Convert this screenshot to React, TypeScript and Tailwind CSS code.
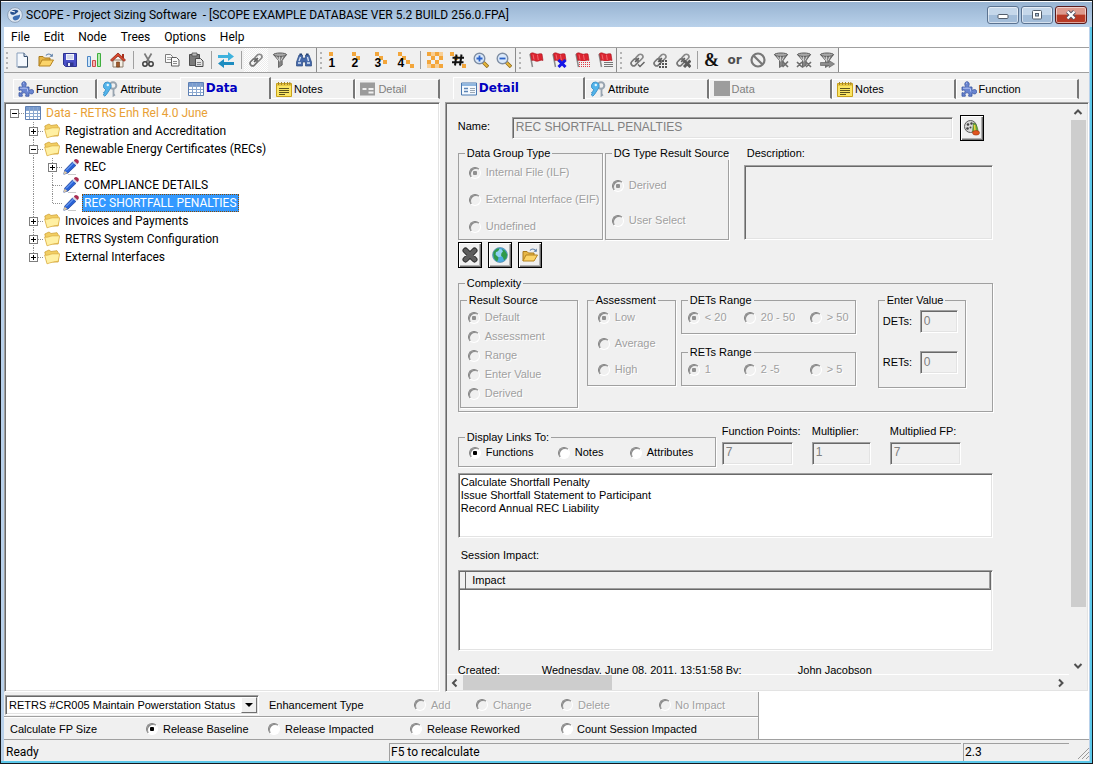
import React, { useState } from "react";

type Kids = { children?: React.ReactNode };

const Svg = ({ children, className = "" }: Kids & { className?: string }) => (
  <svg viewBox="0 0 16 16" className={"size-4 shrink-0 " + className} fill="none" aria-hidden="true">
    {children}
  </svg>
);

/* ---------- icons ---------- */

const PageIcon = () => (
  <Svg>
    <path d="M3 1h7l3.500 3.500V15H3z" fill="#f4f8fd" stroke="#8aa0bd" />
    <path d="M10 1v3.500h3.500" fill="#cfdcec" stroke="#3d5472" />
    <path d="M13.500 5v10H4" stroke="#33475f" />
  </Svg>
);
const OpenIcon = () => (
  <Svg>
    <path d="M1 14V4.500h4l1.500 1.500H12V8" fill="#e6b647" stroke="#a8791c" />
    <path d="M1 14l3-6h11.500l-3.500 6z" fill="#fbd469" stroke="#b58320" />
    <path d="M8 3.500c1.500-2 4-2 5.500 0" stroke="#5b7ea8" strokeWidth="1.200" />
    <path d="M14.800 1.500v3.300h-3.300z" fill="#5b7ea8" />
  </Svg>
);
const SaveIcon = () => (
  <Svg>
    <path d="M1.500 1.500h13v13h-11l-2-2z" fill="#4a50c8" stroke="#2c3290" />
    <path d="M4 2h8v6H4z" fill="#f0f2fb" />
    <path d="M5 4h6M5 6h6" stroke="#b9c0df" />
    <path d="M4.500 10.500h7v4h-7z" fill="#30378e" />
    <path d="M6 11h2v3H6z" fill="#e8ebfa" />
  </Svg>
);
const BarsIcon = () => (
  <Svg>
    <path d="M1.500 4.500h3v10h-3z" fill="#cfe6fa" stroke="#4c86c4" />
    <path d="M6.500 8.500h3v6h-3z" fill="#f7b4b4" stroke="#cc4b4b" />
    <path d="M11.500 1.500h3v13h-3z" fill="#b2ecae" stroke="#3fae3e" />
  </Svg>
);
const HomeIcon = () => (
  <Svg>
    <path d="M3 8h10v7H3z" fill="#f6efe4" stroke="#8b7c6b" />
    <path d="M12 2h2v4h-2z" fill="#a8321f" />
    <path d="M8 1L.5 8l1.500 1.300L8 4l6 5.300L15.500 8z" fill="#d9482e" stroke="#8d2413" strokeWidth=".8" />
    <path d="M6.500 10h3v5h-3z" fill="#a05a2c" stroke="#6d3713" strokeWidth=".6" />
  </Svg>
);
const CutIcon = () => (
  <Svg>
    <path d="M4.500 1.500l5 8.500M11.500 1.500l-5 8.500" stroke="#7b7b7b" strokeWidth="1.700" />
    <circle cx="5" cy="12" r="2.200" stroke="#3e3e3e" strokeWidth="1.500" />
    <circle cx="11" cy="12" r="2.200" stroke="#3e3e3e" strokeWidth="1.500" />
  </Svg>
);
const CopyIcon = () => (
  <Svg>
    <path d="M1.500 2.500h5l2 2v6h-7z" fill="#fafafa" stroke="#7c7c7c" />
    <path d="M3 5.500h4M3 7.500h4" stroke="#a5a5a5" />
    <path d="M7.500 5.500h5l2.500 2.500v6H7.500z" fill="#fafafa" stroke="#5e5e5e" />
    <path d="M9 9.500h4M9 11.500h4" stroke="#8a8a8a" />
  </Svg>
);
const PasteIcon = () => (
  <Svg>
    <path d="M1.500 2.500h10v11h-10z" fill="#7a7a7a" stroke="#4f4f4f" />
    <path d="M4 1h5v3H4z" fill="#bdbdbd" stroke="#4f4f4f" strokeWidth=".8" />
    <path d="M7.500 6.500h5l2.500 2.500v5.500H7.500z" fill="#e4e4e4" stroke="#4a4a4a" />
    <path d="M9 10.500h4M9 12.500h4" stroke="#8a8a8a" />
  </Svg>
);
const SwapIcon = () => (
  <Svg>
    <path d="M0 3h10V0l6 4.500L10 9V6H0z" fill="#3fb2dd" />
    <path d="M16 10H6V7L0 11.500 6 16v-3h10z" fill="#1d8cc0" />
  </Svg>
);
const chainPaths = (
  <>
    <rect x="7.800" y="1.800" width="5" height="8" rx="2.500" transform="rotate(45 10.300 5.800)" stroke="#8a8a8a" strokeWidth="1.700" />
    <rect x="3.200" y="6.200" width="5" height="8" rx="2.500" transform="rotate(45 5.700 10.200)" stroke="#777777" strokeWidth="1.700" />
    <path d="M6 10l4-4" stroke="#5f5f5f" strokeWidth="1.300" />
  </>
);
const ChainIcon = () => <Svg>{chainPaths}</Svg>;
const ChainTickIcon = () => (
  <Svg>
    {chainPaths}
    <path d="M9 12.500l2 2 4.500-4.500" stroke="#666" strokeWidth="1.500" />
  </Svg>
);
const ChainGridIcon = () => (
  <Svg>
    {chainPaths}
    <path d="M7 9h9M7 12h9M7 15h9" stroke="#555" strokeWidth="2" strokeDasharray="2 1" />
  </Svg>
);
const ChainCrossIcon = () => (
  <Svg>
    {chainPaths}
    <path d="M9 8.500l6.500 6.500M15.500 8.500L9 15" stroke="#5c5c5c" strokeWidth="3" />
  </Svg>
);
const funnelPaths = (
  <>
    <path d="M1.500 2.500h13L10.200 8.500V13L6.500 15.500V8.500z" fill="#858585" stroke="#555" strokeWidth=".8" />
    <ellipse cx="8" cy="2.700" rx="6.500" ry="1.700" fill="#a9a9a9" stroke="#5a5a5a" strokeWidth="1" />
    <path d="M4.500 4.500l2.500 4M7.500 4.500v5M11 4.500L9 8.500" stroke="#cfcfcf" />
  </>
);
const FunnelIcon = () => <Svg>{funnelPaths}</Svg>;
const FunnelXIcon = () => (
  <Svg>
    {funnelPaths}
    <path d="M9.500 9.500l5.500 5.500M15 9.500L9.500 15" stroke="#6d6d6d" strokeWidth="1.700" />
  </Svg>
);
const FunnelXXIcon = () => (
  <Svg>
    {funnelPaths}
    <path d="M1 10l5 5M6 10l-5 5M10 10l5 5M15 10l-5 5" stroke="#6d6d6d" strokeWidth="1.600" />
  </Svg>
);
const FunnelArrowIcon = () => (
  <Svg>
    {funnelPaths}
    <path d="M1.500 10.500H10V8.500l5.500 3.500-5.500 3.500v-2H1.500z" fill="#8c8c8c" stroke="#666" strokeWidth=".7" />
  </Svg>
);
const BinocularsIcon = () => (
  <Svg>
    <path d="M3 3h3.500v3h3V3H13l2.500 7v4h-6v-4h-3v4h-6v-4z" fill="#4669aa" stroke="#2b4a80" strokeWidth=".7" />
    <path d="M3.500 1.500h2.500V3H3.500zM10 1.500h2.500V3H10z" fill="#22406f" />
    <path d="M2 11h3M11 11h3M4.500 5l-1.500 4M11.500 5l1 4" stroke="#d5e3f6" strokeWidth="1.300" />
  </Svg>
);

const orange = "#f3a63b";
const LevelIcon = ({ n }: { n: number }) => (
  <span className="relative block size-4">
    <Svg>
      {[0, 1, 2, 3].slice(0, n).map((i) => (
        <rect key={i} x={i * 4} y={i * 4} width="4" height="4" fill={orange} />
      ))}
    </Svg>
    <span className="absolute top-[5px] left-0 font-['Liberation_Sans',Arial,sans-serif] text-[12px] leading-3 font-bold text-black">{n}</span>
  </span>
);
const CheckerIcon = () => (
  <Svg>
    {[0, 1, 2, 3].flatMap((r) =>
      [0, 1, 2, 3].filter((c) => (r + c) % 2 === 0).map((c) => (
        <rect key={r + "-" + c} x={c * 4} y={r * 4} width="4" height="4" fill={orange} />
      ))
    )}
    <path d="M4 0h4v4H4zM8 12h4v4H8zM0 12h4v4H0zM12 0h4v4h-4z" fill="#f9cf94" />
  </Svg>
);
const HashIcon = () => (
  <Svg>
    <path d="M0 0h4v4H0zM12 12h4v4h-4zM4 4h4v4H4z" fill={orange} />
    <path d="M6.500 2.500l-1.500 11M11.500 2.500l-1.500 11M2.500 5.800h11.500M2 10.200h11.500" stroke="#111" strokeWidth="2" />
  </Svg>
);
const ZoomIcon = ({ plus }: { plus?: boolean }) => (
  <Svg>
    <path d="M10 10l5 5" stroke="#8e6a1a" strokeWidth="3.400" />
    <path d="M10.500 10.500l4 4" stroke="#e9b83b" strokeWidth="1.800" />
    <circle cx="6.500" cy="6.500" r="5.300" fill="#dbe9fa" stroke="#7f8ea3" strokeWidth="1.400" />
    <path d={plus ? "M3.500 6.500h6M6.500 3.500v6" : "M3.500 6.500h6"} stroke="#2b62c9" strokeWidth="1.800" />
  </Svg>
);
const flagPaths = (
  <>
    <path d="M2 2l2.500 13" stroke="#8a8a8a" strokeWidth="1.500" />
    <path d="M2.500 1.500c3-2 5 1.500 8 .5 1.500-.5 2.500-.5 3.500 0l1 6.500c-2.500-1-3.500.5-5.500.8C7 9.500 6 7.500 3.800 8.500z" fill="#dc2430" stroke="#a5121d" strokeWidth=".6" />
    <path d="M5 2.500l1 5M9.500 3l.8 5" stroke="#f3676f" />
  </>
);
const FlagIcon = () => <Svg>{flagPaths}</Svg>;
const FlagXIcon = () => (
  <Svg>
    {flagPaths}
    <path d="M7.500 8l7 7M14.500 8l-7 7" stroke="#1616e6" strokeWidth="3" />
  </Svg>
);
const FlagGridIcon = () => (
  <Svg>
    {flagPaths}
    <path d="M5 9h11v7H5z" fill="#f0f0f0" />
    <path d="M5 10.500h11M5 12.500h11M5 14.500h11" stroke="#e23a44" strokeDasharray="1 1" />
  </Svg>
);
const FlagListIcon = () => (
  <Svg>
    {flagPaths}
    <path d="M6 9h10v7H6z" fill="#f0f0f0" />
    <path d="M7 10.500h9M7 12.500h9M7 14.500h9" stroke="#777" />
  </Svg>
);
const AmpIcon = () => (
  <span className="font-['Liberation_Serif','Times_New_Roman',serif] text-[18px] leading-4 font-bold text-[#111]">&amp;</span>
);
const OrIcon = () => (
  <span className="font-['DejaVu_Sans',sans-serif] text-[12px] leading-3 font-bold text-[#4f4f4f]">or</span>
);
const NoIcon = () => (
  <Svg>
    <circle cx="8" cy="8" r="6.500" stroke="#787878" strokeWidth="2.200" />
    <path d="M3.500 3.500l9 9" stroke="#787878" strokeWidth="2.200" />
  </Svg>
);
const PuzzleIcon = () => (
  <Svg>
    <path
      d="M1 6h3.500c.6-.5-.7-1.200-.7-2.700C3.800 1.600 4.800.7 6 .7s2.200.9 2.200 2.600c0 1.500-1.300 2.200-.7 2.700H11v3.200c.5.500 1.200-.7 2.500-.7 1.300 0 2.200 1 2.200 2.200s-.9 2.200-2.200 2.200-2-1.200-2.500-.7v3H7.700c-.6-.5.300-1 .3-1.900 0-.9-.9-1.500-2-1.500s-2 .6-2 1.500c0 .9.900 1.400.3 1.900H1v-3.500c.5-.4 1 .3 1.800.3.700 0 1.200-.7 1.200-1.500s-.5-1.500-1.200-1.500c-.8 0-1.300.7-1.800.3z"
      fill="#6a85d0"
      stroke="#33509e"
      strokeWidth=".8"
    />
    <path d="M2 7.200h7M5 2.500l1-.6M9.500 7.500v3" stroke="#b2c3f2" />
  </Svg>
);
const KeysIcon = () => (
  <Svg>
    <circle cx="11" cy="4.500" r="3.300" stroke="#98a4b0" strokeWidth="2" />
    <path d="M11.500 8v6.500l1.500-1" stroke="#98a4b0" strokeWidth="1.800" />
    <path d="M5.500 1a4 4 0 013 6.300L4.500 13.500l-1.700 1.700L1 13.500l1.300-1-.8-1 1.500-1L3.500 8.500A4 4 0 015.500 1z" fill="#53b4ea" stroke="#2f86c0" strokeWidth=".8" />
    <circle cx="5.800" cy="4" r="1.200" fill="#e6f5fd" />
  </Svg>
);
const GridIcon = () => (
  <Svg>
    <path d="M.5 1.500h15v13H.5z" fill="#fff" stroke="#5d7fb3" />
    <path d="M1 2h14v3H1z" fill="#7a9ccf" />
    <path d="M1 5.500h14M1 8.500h14M1 11.500h14M4.500 2v12M8.500 2v12M12.500 2v12" stroke="#8ba8cf" />
  </Svg>
);
const NotesIcon = () => (
  <Svg>
    <path d="M.5 2.500h15v13H.5z" fill="#fbe564" stroke="#c9a21c" />
    <path d="M1 3h14v2H1z" fill="#e8c745" />
    <path d="M2.500 1v3M5.500 1v3M8.500 1v3M11.500 1v3M13.800 1v3" stroke="#a3842c" />
    <path d="M3 7.500h10M3 9.500h10M3 11.500h10M3 13.500h6" stroke="#5c531e" />
  </Svg>
);
const DetailIcon = () => (
  <Svg>
    <path d="M.5 2h15v12H.5z" fill="#f4f9fe" stroke="#4a78b0" />
    <path d="M1 2.500h14V5H1z" fill="#8fb6df" />
    <path d="M3 7.500h4M3 10.500h4" stroke="#5c85b5" strokeWidth="1.400" />
    <path d="M9 7.500h5M9 9.500h5M9 11.500h5" stroke="#9aa7b5" />
  </Svg>
);
const DetailGreyIcon = () => (
  <Svg>
    <path d="M0 1.500h15v13H0z" fill="#9b9b9b" />
    <path d="M2.500 8h4M8.500 8h5M8.500 11.500h5" stroke="#f0f0f0" strokeWidth="2" />
  </Svg>
);
const SquareGreyIcon = () => (
  <Svg>
    <path d="M0 0h16v15H0z" fill="#9d9d9d" />
  </Svg>
);
const FolderIcon = () => (
  <Svg>
    <path d="M.8 3L5 1l2 1.500 6-.8 1.200 2V13H3z" fill="#f2ce62" stroke="#d0a33a" strokeWidth=".8" />
    <path d="M3 14.800L.6 6c3.500 1 5.500-1.200 8.200-1.200h6.900L14.200 12.300c-4 .2-7.500 1.300-11.200 2.500z" fill="#fff0a3" stroke="#dcae42" strokeWidth=".8" />
  </Svg>
);
const PencilIcon = () => (
  <Svg>
    <path d="M5 15.500h8" stroke="#c9c9c9" />
    <path d="M.8 15.200l1-4.200L9.500 3l3.500 3.300L5 14z" fill="#2a63d6" stroke="#153a92" strokeWidth=".7" />
    <path d="M.8 15.200l.8-3.500L4.500 14z" fill="#e9cfa2" />
    <path d="M3 11.500l7.500-7.500" stroke="#86b4ff" />
    <path d="M9.500 3l1.500-1.500 3.500 3.300-1.500 1.500z" fill="#d8dce6" />
    <path d="M11 1.500C12.500 0 13.500 0 14.700 1s1.200 2.500-.2 3.800z" fill="#b02a52" stroke="#8a183b" strokeWidth=".5" />
  </Svg>
);
const BigXIcon = () => (
  <Svg>
    <path d="M3.500 3.500l9 9M12.500 3.500l-9 9" stroke="#2c2c2c" strokeWidth="6" strokeLinecap="round" />
    <path d="M3.500 3.500l9 9M12.500 3.500l-9 9" stroke="#5c5c5c" strokeWidth="4" strokeLinecap="round" />
  </Svg>
);
const GlobeIcon = () => (
  <Svg>
    <circle cx="8" cy="8" r="7.500" fill="#4da9de" stroke="#4d7f9f" strokeWidth=".6" />
    <circle cx="7" cy="6" r="4" fill="#8fd0f0" />
    <path d="M1.500 5C3 2.500 5 1.200 7.500 1.200L7 3 5.500 4.500 4 5 3.500 7.500 5 9l1.500 1.500L6 13l-1 1.500C2.500 12.500.8 10 1.500 5z" fill="#2f9a4a" />
    <path d="M10 2l3 1.500 2.200 4-.7 3.500-2.500 2.500-1-3L9 8.500 9.500 6l1.500-1.500z" fill="#2f9a4a" />
  </Svg>
);
const FilmIcon = () => (
  <Svg>
    <circle cx="6.500" cy="6.500" r="6" fill="#d9d9d9" stroke="#5d5d5d" />
    <circle cx="4" cy="4.500" r="1.300" fill="#444" />
    <circle cx="7.500" cy="3.500" r="1.200" fill="#444" />
    <circle cx="3.500" cy="8.500" r="1.300" fill="#444" />
    <circle cx="6.500" cy="7.500" r="1" fill="#444" />
    <path d="M9.500 3c2.500.5 4 3.500 4.500 8l-5.500 1z" fill="#69a83a" stroke="#3f6d1d" strokeWidth=".6" />
    <path d="M10.500 5l.5 6" stroke="#f2d13c" strokeWidth="1.500" />
    <ellipse cx="12" cy="12.800" rx="3.500" ry="2.300" fill="#e1551f" stroke="#9c3410" strokeWidth=".6" />
  </Svg>
);
const AppIcon = () => (
  <Svg>
    <circle cx="8" cy="8" r="7.400" fill="#dfe8f2" stroke="#8ca0b8" />
    <path d="M3 6c1-3 5-4 8-2.500 1 1.500-1 2-2 3S5 9 3 6z" fill="#27508f" />
    <path d="M6 10c2-2 5-1 7-2.500.5 3-2 6-5 6-1.500-.5-3-2-2-3.500z" fill="#3c6db2" />
    <path d="M4 4l4 1" stroke="#fff" strokeWidth="1.200" />
  </Svg>
);
const Chevron = ({ d }: { d: string }) => (
  <svg viewBox="0 0 16 16" className="size-4" fill="none" aria-hidden="true">
    <path d={d} stroke="#505050" strokeWidth="2" />
  </svg>
);

/* ---------- toolbar ---------- */

type Tool = [string, React.ReactNode] | "sep";

const groups: { button: string; grip: string; tools: Tool[] }[] = [
  {
    button: "w-6",
    grip: "w-1.5",
    tools: [
      ["New", <PageIcon />],
      ["Open", <OpenIcon />],
      ["Save", <SaveIcon />],
      ["Statistics", <BarsIcon />],
      ["Home", <HomeIcon />],
      "sep",
      ["Cut", <CutIcon />],
      ["Copy", <CopyIcon />],
      ["Paste", <PasteIcon />],
      "sep",
      ["Swap trees", <SwapIcon />],
      "sep",
      ["Link", <ChainIcon />],
      ["Filter", <FunnelIcon />],
      ["Find", <BinocularsIcon />],
    ],
  },
  {
    button: "w-[23px]",
    grip: "w-2",
    tools: [
      ["Level 1", <LevelIcon n={1} />],
      ["Level 2", <LevelIcon n={2} />],
      ["Level 3", <LevelIcon n={3} />],
      ["Level 4", <LevelIcon n={4} />],
      "sep",
      ["All levels", <CheckerIcon />],
      ["Numbering", <HashIcon />],
      ["Zoom in", <ZoomIcon plus />],
      ["Zoom out", <ZoomIcon />],
    ],
  },
  {
    button: "w-[23px]",
    grip: "w-2",
    tools: [
      ["Flag", <FlagIcon />],
      ["Clear flag", <FlagXIcon />],
      ["Flag all", <FlagGridIcon />],
      ["Flag list", <FlagListIcon />],
    ],
  },
  {
    button: "w-[23px]",
    grip: "w-2",
    tools: [
      ["Check links", <ChainTickIcon />],
      ["Link grid", <ChainGridIcon />],
      ["Remove links", <ChainCrossIcon />],
      "sep",
      ["And", <AmpIcon />],
      ["Or", <OrIcon />],
      ["Not", <NoIcon />],
      ["Clear filter", <FunnelXIcon />],
      ["Clear all filters", <FunnelXXIcon />],
      ["Apply filter", <FunnelArrowIcon />],
    ],
  },
];

const Toolbar = () => (
  <div className="flex h-[26px] shrink-0 border-y border-[#a0a0a0] bg-white">
    {groups.map((g, i) => (
      <div key={i} className="flex h-6 items-center border-r border-[#8c8c8c] bg-[#f0f0f0]">
        <span className={"flex h-full flex-col items-center justify-center gap-[3px] " + g.grip}>
          {[0, 1, 2, 3].map((d) => (
            <i key={d} className="size-0.5 bg-[#b4b4b4]" />
          ))}
        </span>
        {g.tools.map((t, k) =>
          t === "sep" ? (
            <span key={k} className="flex h-full w-1.5 items-center justify-center">
              <i className="h-[18px] w-px bg-[#a0a0a0]" />
            </span>
          ) : (
            <button
              key={k}
              type="button"
              aria-label={t[0]}
              className={
                "flex h-6 items-center justify-center " +
                g.button +
                (t[0] === "Link" ? " bg-[conic-gradient(#fff_25%,#ececec_0_50%,#fff_0_75%,#ececec_0)] bg-size-[2px_2px]" : "")
              }
            >
              {t[1]}
            </button>
          )
        )}
      </div>
    ))}
  </div>
);

/* ---------- tabs ---------- */

type TabDef = { label: string; icon: React.ReactNode; state?: "on" | "off" };

const Tabs = ({ tabs, className }: { tabs: TabDef[]; className: string }) => (
  <div role="tablist" className={"flex h-[22px] min-w-0 items-end " + className}>
    {tabs.map((t, i) => (
      <button
        key={i}
        type="button"
        role="tab"
        aria-selected={t.state === "on"}
        className={
          "flex min-w-0 items-center gap-0.5 overflow-hidden border-t border-l border-white whitespace-nowrap " +
          (t.state === "on"
            ? "h-[22px] flex-[21] pl-[7px] font-['DejaVu_Sans',sans-serif] text-[12px] font-bold text-[#0000c0]"
            : "h-5 flex-[20] border-b pl-1 text-[11px]") +
          (t.state === "off" ? " text-[#808080]" : "") +
          (tabs[i + 1]?.state === "on" ? "" : " border-r-2 border-r-[#777]")
        }
      >
        {t.icon}
        {t.label}
      </button>
    ))}
  </div>
);

const leftTabs: TabDef[] = [
  { label: "Function", icon: <PuzzleIcon /> },
  { label: "Attribute", icon: <KeysIcon /> },
  { label: "Data", icon: <GridIcon />, state: "on" },
  { label: "Notes", icon: <NotesIcon /> },
  { label: "Detail", icon: <DetailGreyIcon />, state: "off" },
];
const rightTabs: TabDef[] = [
  { label: "Detail", icon: <DetailIcon />, state: "on" },
  { label: "Attribute", icon: <KeysIcon /> },
  { label: "Data", icon: <SquareGreyIcon />, state: "off" },
  { label: "Notes", icon: <NotesIcon /> },
  { label: "Function", icon: <PuzzleIcon /> },
];

/* ---------- tree ---------- */

type Cell = { up?: boolean; down?: boolean; right?: boolean; box?: "+" | "-" };
type Row = { label: string; icon: "grid" | "folder" | "pencil"; cells: Cell[]; on?: boolean };

const line: Cell = { up: true, down: true };
const rows: Row[] = [
  { label: "Data - RETRS Enh Rel 4.0 June", icon: "grid", cells: [{ right: true, box: "-" }] },
  { label: "Registration and Accreditation", icon: "folder", cells: [{}, { ...line, right: true, box: "+" }] },
  { label: "Renewable Energy Certificates (RECs)", icon: "folder", cells: [{}, { ...line, right: true, box: "-" }] },
  { label: "REC", icon: "pencil", cells: [{}, line, { ...line, right: true, box: "+" }] },
  { label: "COMPLIANCE DETAILS", icon: "pencil", cells: [{}, line, { ...line, right: true }] },
  { label: "REC SHORTFALL PENALTIES", icon: "pencil", cells: [{}, line, { up: true, right: true }], on: true },
  { label: "Invoices and Payments", icon: "folder", cells: [{}, { ...line, right: true, box: "+" }] },
  { label: "RETRS System Configuration", icon: "folder", cells: [{}, { ...line, right: true, box: "+" }] },
  { label: "External Interfaces", icon: "folder", cells: [{}, { up: true, right: true, box: "+" }] },
];

const Guide = ({ c }: { c: Cell }) => (
  <svg viewBox="0 0 19 18" className="h-[18px] w-[19px]" fill="none" aria-hidden="true">
    <g stroke="#909090" strokeDasharray="1 1">
      {c.up && <path d="M8.500 0v9" />}
      {c.down && <path d="M8.500 9v9" />}
      {c.right && <path d="M9 9.500h10" />}
    </g>
    {c.box && (
      <>
        <rect x="4.500" y="5.500" width="8" height="8" fill="#fff" stroke="#7e7e7e" />
        <path d={c.box === "+" ? "M6 9.500h5M8.500 7v5" : "M6 9.500h5"} stroke="#000" />
      </>
    )}
  </svg>
);

const Tree = () => (
  <ul role="tree" aria-label="Data" className="font-['Roboto','Segoe_UI',sans-serif] text-[12px] leading-4">
    {rows.map((r) => (
      <li key={r.label} role="treeitem" aria-selected={!!r.on} className="flex h-[18px] items-center whitespace-nowrap">
        {r.cells.map((c, i) =>
          c.box ? (
            <button key={i} type="button" aria-label={(c.box === "+" ? "Expand " : "Collapse ") + r.label}>
              <Guide c={c} />
            </button>
          ) : (
            <Guide key={i} c={c} />
          )
        )}
        {r.icon === "grid" ? <GridIcon /> : r.icon === "folder" ? <FolderIcon /> : <PencilIcon />}
        <span
          className={
            "ml-[3px] border border-dotted px-px " +
            (r.on
              ? "border-[#8a4a00] bg-[#3399ff] text-white"
              : r.icon === "grid"
                ? "border-transparent text-[#e8a035]"
                : "border-transparent text-black")
          }
        >
          {r.label}
        </span>
      </li>
    ))}
  </ul>
);

/* ---------- form parts ---------- */

const sunken =
  "border border-t-[#a0a0a0] border-l-[#a0a0a0] border-r-white border-b-white shadow-[inset_1px_1px_0_#696969,inset_-1px_-1px_0_#e3e3e3]";

const Radio = ({ name, label, on, off, gap = "gap-[5px]" }: { name: string; label: string; on?: boolean; off?: boolean; gap?: string }) => (
  <label className={"flex h-[13px] items-center whitespace-nowrap " + gap + (off ? " text-[#a0a0a0] [text-shadow:1px_1px_0_#fff]" : "")}>
    <input
      type="radio"
      name={name}
      defaultChecked={on}
      disabled={off}
      className={
        "size-3 shrink-0 appearance-none rounded-full border border-t-[#808080] border-r-white border-b-white border-l-[#808080] shadow-[inset_1px_1px_0_#8a8a8a] " +
        (off
          ? "bg-[#f0f0f0] checked:bg-[radial-gradient(circle,#909090_0_2px,transparent_2.5px)]"
          : "bg-white checked:bg-[radial-gradient(circle,#000_0_2px,transparent_2.5px)]")
      }
    />
    {label}
  </label>
);

const Group = ({ title, className = "", children }: Kids & { title: string; className?: string }) => (
  <fieldset className={"min-w-0 border border-[#a0a0a0] shadow-[1px_1px_0_#fff] " + className}>
    <legend className="ml-1.5 h-[13px] px-0.5 leading-[13px] whitespace-nowrap">{title}</legend>
    {children}
  </fieldset>
);

const Field = ({ id, label, value, className }: { id: string; label: string; value: string; className: string }) => (
  <div className={"flex flex-col gap-1 " + className}>
    <label htmlFor={id} className="leading-[13px] whitespace-nowrap">{label}</label>
    <input id={id} disabled defaultValue={value} className={"h-[23px] w-full px-[3px] pb-1 text-[12px] text-[#808080] " + sunken} />
  </div>
);

const ToolButton = ({ label, children }: Kids & { label: string }) => (
  <button
    type="button"
    aria-label={label}
    className="flex h-[26px] w-6 items-center justify-center border border-black bg-[#f0f0f0] shadow-[inset_1px_1px_0_#fff,inset_-1px_-1px_0_#707070,inset_-2px_-2px_0_#b0b0b0]"
  >
    {children}
  </button>
);

const Form = () => (
  <form className="flex w-[535px] flex-col pt-[11px]" onSubmit={(e) => e.preventDefault()}>
    <div className="flex items-center">
      <label htmlFor="name" className="w-[54px] pb-1">Name:</label>
      <input id="name" disabled defaultValue="REC SHORTFALL PENALTIES" className={"h-[22px] w-[441px] px-[3px] pb-0.5 text-[12px] text-[#808080] " + sunken} />
      <span className="ml-[7px]">
        <ToolButton label="Play media"><FilmIcon /></ToolButton>
      </span>
    </div>

    <div className="mt-1.5 flex">
      <Group title="Data Group Type" className="h-[93px] w-[145px]">
        <div className="flex flex-col gap-3.5 pt-1.5 pl-2.5">
          <Radio name="group" label="Internal File (ILF)" on off />
          <Radio name="group" label="External Interface (EIF)" off />
          <Radio name="group" label="Undefined" off />
        </div>
      </Group>
      <Group title="DG Type Result Source" className="ml-0.5 h-[93px] w-[124px]">
        <div className="flex flex-col gap-[22px] pt-[19px] pl-1.5">
          <Radio name="dg" label="Derived" on off />
          <Radio name="dg" label="User Select" off />
        </div>
      </Group>
      <div className="ml-[15px] flex flex-1 flex-col gap-[5px]">
        <label htmlFor="description" className="pl-[3px] leading-[13px]">Description:</label>
        <textarea id="description" disabled className={"min-h-0 w-full flex-1 resize-none " + sunken} />
      </div>
    </div>

    <div className="mt-0.5 flex gap-1.5">
      <ToolButton label="Delete"><BigXIcon /></ToolButton>
      <ToolButton label="Web"><GlobeIcon /></ToolButton>
      <ToolButton label="Open file"><OpenIcon /></ToolButton>
    </div>

    <Group title="Complexity" className="mt-[9px] h-[135px]">
      <div className="flex items-start pt-1 pl-px">
        <Group title="Result Source" className="h-[114px] w-[118px]">
          <div className="flex flex-col gap-1.5 pt-1 pl-[7px]">
            <Radio name="source" label="Default" on off />
            <Radio name="source" label="Assessment" off />
            <Radio name="source" label="Range" off />
            <Radio name="source" label="Enter Value" off />
            <Radio name="source" label="Derived" off />
          </div>
        </Group>
        <Group title="Assessment" className="ml-[9px] h-[92px] w-[89px]">
          <div className="flex flex-col gap-[13px] pt-1 pl-2.5">
            <Radio name="assessment" label="Low" on off />
            <Radio name="assessment" label="Average" off />
            <Radio name="assessment" label="High" off />
          </div>
        </Group>
        <div className="ml-[5px] flex flex-col gap-3">
          <Group title="DETs Range" className="h-10 w-[175px]">
            <div className="grid grid-cols-[56px_66px_1fr] pt-1 pl-1.5">
              <Radio name="dets-range" label="< 20" on off />
              <Radio name="dets-range" label="20 - 50" off />
              <Radio name="dets-range" label="> 50" off />
            </div>
          </Group>
          <Group title="RETs Range" className="h-10 w-[175px]">
            <div className="grid grid-cols-[56px_66px_1fr] pt-1 pl-1.5">
              <Radio name="rets-range" label="1" on off />
              <Radio name="rets-range" label="2 -5" off />
              <Radio name="rets-range" label="> 5" off />
            </div>
          </Group>
        </div>
        <Group title="Enter Value" className="ml-[22px] h-[94px] w-[88px]">
          <div className="grid grid-cols-[37px_38px] items-center gap-y-[18px] pt-[3px] pl-1">
            <label htmlFor="dets">DETs:</label>
            <input id="dets" disabled defaultValue="0" className={"h-[23px] px-[3px] pb-0.5 text-[12px] text-[#808080] " + sunken} />
            <label htmlFor="rets">RETs:</label>
            <input id="rets" disabled defaultValue="0" className={"h-[23px] px-[3px] pb-0.5 text-[12px] text-[#808080] " + sunken} />
          </div>
        </Group>
      </div>
    </Group>

    <div className="mt-[13px] flex items-end">
      <Group title="Display Links To:" className="h-9 w-[258px]">
        <div className="grid grid-cols-[89px_72px_1fr] pt-0.5 pl-2.5">
          <Radio name="links" label="Functions" on />
          <Radio name="links" label="Notes" />
          <Radio name="links" label="Attributes" />
        </div>
      </Group>
      <div className="ml-1.5 flex pb-0.5">
        <Field id="fp" label="Function Points:" value="7" className="w-[71px]" />
        <Field id="mult" label="Multiplier:" value="1" className="ml-[19px] w-[59px]" />
        <Field id="mfp" label="Multiplied FP:" value="7" className="ml-[19px] w-[71px]" />
      </div>
    </div>

    <ul aria-label="Linked functions" className={"mt-1.5 h-[65px] bg-white px-0.5 pt-0.5 leading-[13px] " + sunken}>
      <li>Calculate Shortfall Penalty</li>
      <li>Issue Shortfall Statement to Participant</li>
      <li>Record Annual REC Liability</li>
    </ul>

    <h2 id="impact-title" className="mt-[9px] pl-[3px] leading-4">Session Impact:</h2>
    <div className={"mt-[7px] h-[81px] bg-white p-px " + sunken}>
      <table aria-labelledby="impact-title" className="w-full border-collapse">
        <thead>
          <tr className="h-[17px] border-r border-b border-[#696969] bg-[#f0f0f0] text-left shadow-[inset_-1px_-1px_0_#a0a0a0]">
            <th aria-label="Row selector" className="w-1.5 border-r border-[#696969] p-0"></th>
            <th className="p-0 pl-1.5 leading-[15px] font-normal">Impact</th>
          </tr>
        </thead>
      </table>
    </div>

    <div className="mt-3 grid grid-cols-[84px_184px_72px_1fr] leading-[15px] whitespace-nowrap">
      <span>Created:</span>
      <span>Wednesday, June 08, 2011, 13:51:58</span>
      <span>By:</span>
      <span>John Jacobson</span>
    </div>
  </form>
);

/* ---------- window ---------- */

const caption = "flex h-[18px] w-8 items-center justify-center rounded-[3px] border shadow-[inset_0_0_0_1px_rgba(255,255,255,0.55)] ";

export default function App() {
  const [release, setRelease] = useState("RETRS #CR005 Maintain Powerstation Status");
  return (
    <div className="flex h-screen flex-col overflow-hidden border border-[#15181c] bg-[#b9d1ea] px-[3px] pb-0.5 font-['Liberation_Sans',Arial,sans-serif] text-[11px] leading-[13px] text-black shadow-[inset_-2px_-2px_0_#5cc8ea]">
      <header className="-mx-[3px] flex h-[26px] shrink-0 items-center gap-[3px] border-t border-white bg-linear-to-b from-[#98b4d2] to-[#b9d1ea] pr-[5px] pl-1.5">
        <AppIcon />
        <h1 className="min-w-0 flex-1 truncate font-['Roboto','Segoe_UI',sans-serif] text-[12px] leading-4 whitespace-pre">
          {"SCOPE - Project Sizing Software  - [SCOPE EXAMPLE DATABASE VER 5.2 BUILD 256.0.FPA]"}
        </h1>
        <div className="flex gap-0.5">
          <button type="button" aria-label="Minimize" className={caption + "border-[#5b7391] bg-linear-to-b from-[#c5d7ea] from-50% to-[#a3bdd9] to-50%"}>
            <svg viewBox="0 0 12 10" className="h-2.5 w-3" aria-hidden="true"><rect x="1" y="4.500" width="10" height="4" rx="1" fill="#fff" stroke="#535e6c" /></svg>
          </button>
          <button type="button" aria-label="Restore" className={caption + "border-[#5b7391] bg-linear-to-b from-[#c5d7ea] from-50% to-[#a3bdd9] to-50%"}>
            <svg viewBox="0 0 12 10" className="h-2.5 w-3" aria-hidden="true">
              <rect x="1.500" y=".5" width="9" height="8.500" rx="1" fill="#fff" stroke="#535e6c" />
              <rect x="4.500" y="3.500" width="3" height="2.500" fill="#a9c0da" stroke="#535e6c" />
            </svg>
          </button>
          <button type="button" aria-label="Close" className={caption + "border-[#5a1a1c] bg-linear-to-b from-[#dd9a8d] from-45% to-[#b83a25] to-50%"}>
            <svg viewBox="0 0 12 10" className="h-2.5 w-3" aria-hidden="true">
              <path d="M2.500 1.500l7 7M9.500 1.500l-7 7" stroke="#535666" strokeWidth="4" />
              <path d="M2.500 1.500l7 7M9.500 1.500l-7 7" stroke="#fff" strokeWidth="2.200" />
            </svg>
          </button>
        </div>
      </header>

      <nav className="flex h-5 shrink-0 items-center gap-3.5 bg-white pl-[7px] font-['Roboto','Segoe_UI',sans-serif] text-[12px]">
        {["File", "Edit", "Node", "Trees", "Options", "Help"].map((m) => (
          <button key={m} type="button">{m}</button>
        ))}
      </nav>

      <Toolbar />

      <main className="grid min-h-0 flex-1 grid-cols-[437fr_646fr] grid-rows-[29px_1fr] gap-x-[5px] bg-[#f0f0f0]">
        <Tabs tabs={leftTabs} className="mt-1 ml-[9px]" />
        <Tabs tabs={rightTabs} className="mt-1 mr-2.5 ml-2" />

        <section aria-label="Tree" className={"min-h-0 overflow-hidden bg-white p-px " + sunken}>
          <Tree />
        </section>

        <section aria-label="Detail" className={"grid min-h-0 min-w-0 grid-cols-[1fr_18px] grid-rows-[1fr_16px] p-px " + sunken}>
          <div className="min-h-0 overflow-hidden pl-[11px]">
            <Form />
          </div>
          <div className="flex flex-col items-center">
            <button type="button" aria-label="Scroll up"><Chevron d="M4.500 10L8 6.500 11.500 10" /></button>
            <div className="w-[15px] flex-[86] bg-[#cdcdcd]" />
            <div className="flex-[9]" />
            <button type="button" aria-label="Scroll down"><Chevron d="M4.500 6L8 9.500 11.500 6" /></button>
          </div>
          <div className="flex items-center border-t border-white">
            <button type="button" aria-label="Scroll left"><Chevron d="M9.500 4.500L6 8l3.500 3.500" /></button>
            <div className="h-[15px] flex-[25] bg-[#cdcdcd]" />
            <div className="flex-[74]" />
            <button type="button" aria-label="Scroll right"><Chevron d="M6 4.500L9.500 8 6 11.500" /></button>
          </div>
        </section>
      </main>

      <div className="flex shrink-0 bg-white">
        <div className="w-[755px] border-r border-[#a0a0a0] bg-[#f0f0f0]">
          <div className="grid h-[25px] grid-cols-[255px_155px_62px_85px_98px_1fr] items-center border-b border-[#a0a0a0] pt-0.5">
            <div className={"relative ml-px h-5 bg-white p-px " + sunken}>
              <select
                aria-label="Release"
                value={release}
                onChange={(e) => setRelease(e.target.value)}
                className="block size-full appearance-none pr-4 pl-0.5 outline-none"
              >
                <option>RETRS #CR005 Maintain Powerstation Status</option>
              </select>
              <span className="pointer-events-none absolute inset-y-px right-px flex w-4 items-center justify-center border border-t-white border-r-[#707070] border-b-[#707070] border-l-white bg-[#f0f0f0]">
                <svg viewBox="0 0 8 4" className="h-1 w-2" aria-hidden="true"><path d="M0 0h8L4 4z" /></svg>
              </span>
            </div>
            <span className="pl-2.5">Enhancement Type</span>
            <Radio name="enh" label="Add" off />
            <Radio name="enh" label="Change" off />
            <Radio name="enh" label="Delete" off />
            <Radio name="enh" label="No Impact" off gap="gap-1" />
          </div>
          <div className="grid h-[22px] grid-cols-[142px_122px_142px_151px_1fr] items-center border-t border-white pt-px">
            <span className="pl-1.5">Calculate FP Size</span>
            <Radio name="calc" label="Release Baseline" on />
            <Radio name="calc" label="Release Impacted" />
            <Radio name="calc" label="Release Reworked" />
            <Radio name="calc" label="Count Session Impacted" gap="gap-1" />
          </div>
        </div>
      </div>

      <footer className="flex h-[22px] shrink-0 items-end border-t border-[#a0a0a0] bg-[#f0f0f0] font-['Roboto','Segoe_UI',sans-serif] text-[12px] leading-4">
        <span className="h-[18px] w-[385px] pt-px pl-0.5">Ready</span>
        <span className="h-[18px] flex-1 border-t border-l border-[#a0a0a0] pl-px">F5 to recalculate</span>
        <span className="ml-0.5 h-[18px] w-[106px] border-t border-l border-[#a0a0a0] border-r-white pl-px">2.3</span>
        <svg viewBox="0 0 12 12" className="mb-0.5 ml-2 size-3" aria-hidden="true"><path d="M1 12L12 1M5 12l7-7M9 12l3-3" stroke="#9a9a9a" /></svg>
      </footer>
    </div>
  );
}
